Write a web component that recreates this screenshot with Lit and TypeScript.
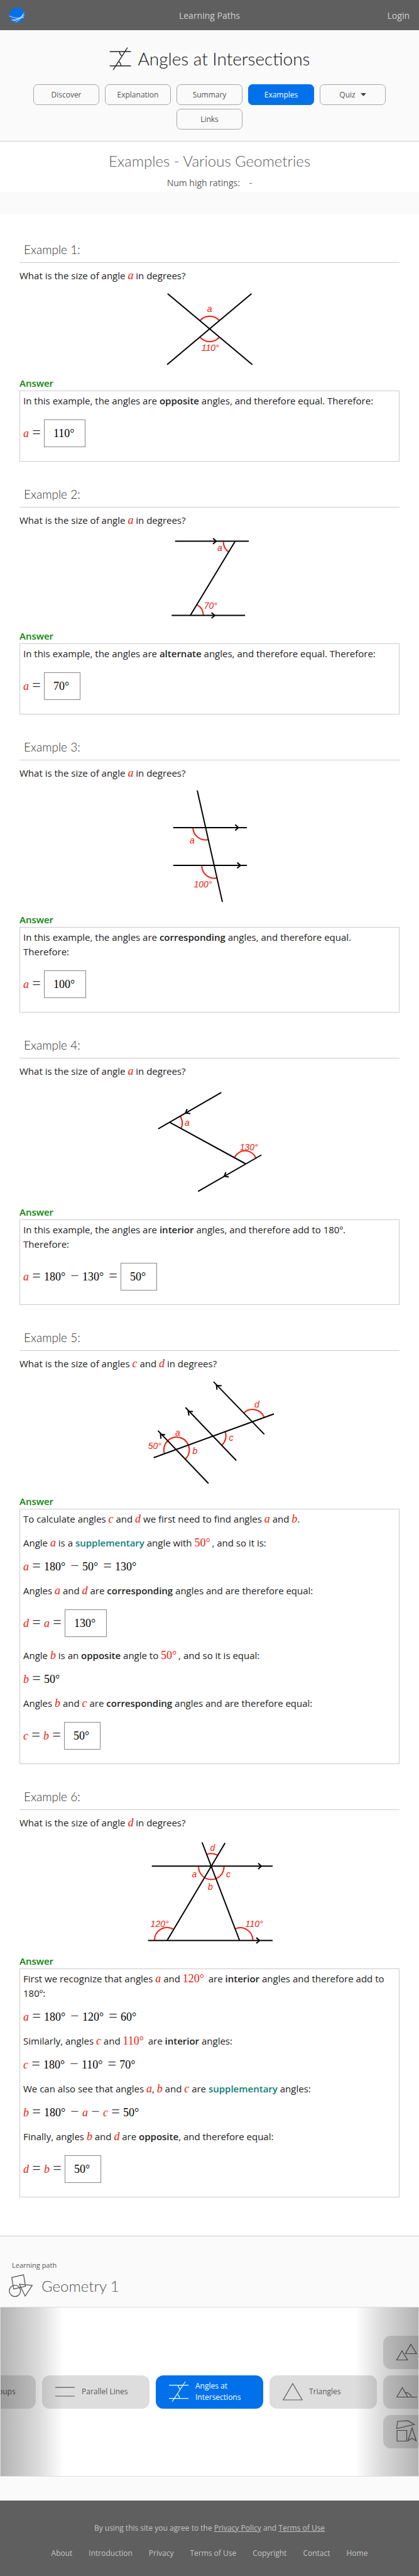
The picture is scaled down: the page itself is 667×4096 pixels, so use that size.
import { LitElement, html, svg, css, TemplateResult, SVGTemplateResult } from "lit";
import { customElement, property } from "lit/decorators.js";

/** Shared look of mathematical notation. */
const mathStyles = css`
  .m {
    font-family: "Liberation Serif", "Times New Roman", serif;
    font-size: 18px;
    line-height: 1;
    color: #000;
  }
  .v,
  .red {
    color: #f0200c;
  }
  .v {
    font-style: italic;
  }
  .deg {
    display: inline-block;
    width: 10px;
  }
  .op {
    display: inline-block;
    width: 14px;
    margin: 0 5px;
    font-size: 24px;
    line-height: 0;
    text-align: center;
    color: #333;
  }
`;

const sign = html`<span class="deg">°</span>`;
const v = (name: string) => html`<span class="m v">${name}</span>`;
const deg = (n: number) => html`<span class="m">${n}${sign}</span>`;
const redDeg = (n: number) => html`<span class="m red">${n}${sign}</span>`;
const op = (symbol: string) => html`<span class="m op">${symbol}</span>`;
const eq = op("=");
const minus = op("−");
const boxed = (n: number) => html`<span class="m boxed">${n}${sign}</span>`;

interface Diagram {
  height: number;
  label: string;
  lines: string[];
  arcs: string[];
  texts: [number, number, string][];
}

interface Example {
  question: TemplateResult;
  diagram: Diagram;
  answer: TemplateResult;
}

const examples: Example[] = [
  {
    question: html`What is the size of angle ${v("a")} in degrees?`,
    diagram: {
      height: 148,
      label: "Two crossing lines",
      lines: ["M72.8 16.9L207.6 129.7", "M206.4 16.9L72 129.7"],
      arcs: ["M124.7 59.5A20.5 20.5 0 0 1 154.9 59.5", "M124.7 86.5A20.5 20.5 0 0 0 154.9 86.5"],
      texts: [[135.8, 46.4, "a"], [126.8, 108, "110°"]],
    },
    answer: html`
      <p>In this example, the angles are <b>opposite</b> angles, and therefore equal. Therefore:</p>
      <p class="result">${v("a")}${eq}${boxed(110)}</p>
    `,
  },
  {
    question: html`What is the size of angle ${v("a")} in degrees?`,
    diagram: {
      height: 161,
      label: "A line joining two parallel lines",
      lines: [
        "M84.7 21.4H202.1", "M79.2 139.6H196.2", "M180.4 21.4L109 139.6",
        "M145.1 17L150.2 21.4L145.1 25.9", "M142.6 135.2L148.1 139.6L142.6 144",
      ],
      arcs: ["M161.7 22.4A20 20 0 0 0 169.8 38.6", "M119.2 122.4A20 20 0 0 1 129.8 139"],
      texts: [[151.9, 37.3, "a"], [130.7, 129.1, "70°"]],
    },
    answer: html`
      <p>In this example, the angles are <b>alternate</b> angles, and therefore equal. Therefore:</p>
      <p class="result">${v("a")}${eq}${boxed(70)}</p>
    `,
  },
  {
    question: html`What is the size of angle ${v("a")} in degrees?`,
    diagram: {
      height: 210,
      label: "A line crossing two parallel lines",
      lines: [
        "M120 15.9L160 193.1", "M81.7 74.9H199.1", "M81.7 135H199.1",
        "M180.4 70.3L185.5 74.9L180.4 79.5", "M183.6 130.4L188.7 135L183.6 139.6",
      ],
      arcs: ["M113.2 75.9A20 20 0 0 0 137.5 94", "M127.2 136A20 20 0 0 0 151.5 155"],
      texts: [[108.1, 99.7, "a"], [114.5, 170.2, "100°"]],
    },
    answer: html`
      <p>In this example, the angles are <b>corresponding</b> angles, and therefore equal. Therefore:</p>
      <p class="result">${v("a")}${eq}${boxed(100)}</p>
    `,
  },
  {
    question: html`What is the size of angle ${v("a")} in degrees?`,
    diagram: {
      height: 201,
      label: "A line joining two sloping parallel lines",
      lines: [
        "M158.3 22.1L57.9 79.9", "M75.8 69.4L197 135.5", "M222.1 121.5L121.3 179.3",
        "M103.9 48.5L101.3 54.8L109 55.8", "M165.5 148.8L163 155.3L170.2 156.4",
      ],
      arcs: ["M92.8 59.9A20 20 0 0 1 94.1 79.6", "M179.6 125A18.5 18.5 0 0 1 213.2 126"],
      texts: [[100, 75.4, "a"], [187.7, 113.6, "130°"]],
    },
    answer: html`
      <p>In this example, the angles are <b>interior</b> angles, and therefore add to 180º. Therefore:</p>
      <p class="result">${v("a")}${eq}${deg(180)}${minus}${deg(130)}${eq}${boxed(50)}</p>
    `,
  },
  {
    question: html`What is the size of angles ${v("c")} and ${v("d")} in degrees?`,
    diagram: {
      height: 196,
      label: "A line crossing three parallel lines",
      lines: [
        "M50.7 137.8L242.1 68.2", "M57.5 94.9L137.9 178.7", "M101.3 58L182.1 142.2", "M146 17.1L226.8 100.6",
        "M69 101.6L61.5 100.4L62.2 107.6", "M113.2 64.4L105.6 64L106.8 70.8", "M158.7 23.4L150.6 23L151.5 29.8",
      ],
      arcs: [
        "M67.7 131.7A20 20 0 0 1 73.2 110.8", "M73.2 110.8A20 20 0 0 1 105.6 117.1",
        "M105.6 117.1A20 20 0 0 1 101.3 139.7", "M164.7 96.8A20 20 0 0 1 159.2 117.8",
        "M194 66.9A20 20 0 0 1 226.4 73.3",
      ],
      texts: [
        [85.1, 103.1, "a"], [41.7, 124.1, "50°"], [112.4, 131.7, "b"], [170.6, 111.4, "c"], [211, 58.4, "d"],
      ],
    },
    answer: html`
      <p>To calculate angles ${v("c")} and ${v("d")} we first need to find angles ${v("a")} and ${v("b")}.</p>
      <p>Angle ${v("a")} is a <a href="#supplementary">supplementary</a> angle with ${redDeg(50)}, and so it is:</p>
      <p>${v("a")}${eq}${deg(180)}${minus}${deg(50)}${eq}${deg(130)}</p>
      <p>Angles ${v("a")} and ${v("d")} are <b>corresponding</b> angles and are therefore equal:</p>
      <p class="result">${v("d")}${eq}${v("a")}${eq}${boxed(130)}</p>
      <p>Angle ${v("b")} is an <b>opposite</b> angle to ${redDeg(50)}, and so it is equal:</p>
      <p>${v("b")}${eq}${deg(50)}</p>
      <p>Angles ${v("b")} and ${v("c")} are <b>corresponding</b> angles and are therefore equal:</p>
      <p class="result">${v("c")}${eq}${v("b")}${eq}${boxed(50)}</p>
    `,
  },
  {
    question: html`What is the size of angle ${v("d")} in degrees?`,
    diagram: {
      height: 197,
      label: "Two lines crossing on one of two parallel lines",
      lines: [
        "M47.7 57.3H240", "M41.7 175.5H240", "M127.7 19.5L187.4 175.5", "M164.3 20.5L72 175.5",
        "M217 52.7L221.9 57.3L217 61.9", "M214 170.9L219.1 175.5L214 180.1",
      ],
      arcs: [
        "M135.3 38.6A20 20 0 0 1 152.3 39.9", "M122.1 58.3A20.2 20.2 0 0 0 162.6 58.3",
        "M52 174.8A20 20 0 0 1 81.7 157.4", "M180.9 156.7A20 20 0 0 1 208.5 174.8",
      ],
      texts: [
        [140.4, 32.9, "d"], [111.5, 74.8, "a"], [166, 75.4, "c"], [137, 94.5, "b"],
        [45.6, 153.9, "120°"], [196.6, 153.9, "110°"],
      ],
    },
    answer: html`
      <p>First we recognize that angles ${v("a")} and ${redDeg(120)} are <b>interior</b> angles and therefore add to 180º:</p>
      <p>${v("a")}${eq}${deg(180)}${minus}${deg(120)}${eq}${deg(60)}</p>
      <p>Similarly, angles ${v("c")} and ${redDeg(110)} are <b>interior</b> angles:</p>
      <p>${v("c")}${eq}${deg(180)}${minus}${deg(110)}${eq}${deg(70)}</p>
      <p>We can also see that angles ${v("a")}, ${v("b")} and ${v("c")} are <a href="#supplementary">supplementary</a> angles:</p>
      <p>${v("b")}${eq}${deg(180)}${minus}${v("a")}${minus}${v("c")}${eq}${deg(50)}</p>
      <p>Finally, angles ${v("b")} and ${v("d")} are <b>opposite</b>, and therefore equal:</p>
      <p class="result">${v("d")}${eq}${v("b")}${eq}${boxed(50)}</p>
    `,
  },
];

const anglesIcon = svg`
  <path d="M.7 7H34.4M.7 29.8H34.4M29 .6L6.1 36.2M16.3 7Q16.3 12 21 14.2M18.5 29.8Q18.5 25 15 23.1" />
`;

@customElement("angle-diagram")
export class AngleDiagram extends LitElement {
  @property({ attribute: false }) diagram!: Diagram;

  static styles = css`
    :host {
      display: block;
    }
    svg {
      display: block;
      margin: 0 auto;
      fill: none;
      stroke-width: 2;
    }
    .line {
      stroke: #000;
    }
    .arc {
      stroke: #f0200c;
    }
    text {
      fill: #f0200c;
      font: italic 14px "Liberation Sans", Arial, sans-serif;
    }
  `;

  render() {
    const d = this.diagram;
    return html`
      <svg width="280" height=${d.height} role="img" aria-label=${d.label}>
        ${d.arcs.map((p) => svg`<path class="arc" d=${p} />`)}
        ${d.lines.map((p) => svg`<path class="line" d=${p} />`)}
        ${d.texts.map(([x, y, t]) => svg`<text x=${x} y=${y}>${t}</text>`)}
      </svg>
    `;
  }
}

@customElement("worked-example")
export class WorkedExample extends LitElement {
  @property({ type: Number }) number = 1;
  @property({ attribute: false }) example!: Example;

  static styles = [
    mathStyles,
    css`
      :host {
        display: block;
      }
      h3 {
        margin: 0 0 9px;
        padding: 0 7px 8px;
        border-bottom: 1px solid #ccc;
        font: 300 19px/24px Lato, sans-serif;
        color: #333;
      }
      p {
        margin: 0;
      }
      h4 {
        margin: 0;
        font-size: 15px;
        line-height: 23px;
        font-weight: 600;
        color: #0a840a;
      }
      .answer {
        display: flex;
        flex-direction: column;
        gap: 15px;
        padding: 4px 12px 19px 5px;
        border: 1px solid #ccc;
      }
      .result {
        display: flex;
        align-items: baseline;
        padding: 3px 0;
      }
      .boxed {
        padding: 11px 14px 10px;
        border: 1px solid #888;
        line-height: 21px;
      }
      b {
        font-weight: 600;
      }
      a {
        color: #0a7d74;
        font-weight: 600;
        text-decoration: none;
      }
    `,
  ];

  render() {
    return html`
      <section>
        <h3>Example ${this.number}:</h3>
        <p>${this.example.question}</p>
        <angle-diagram .diagram=${this.example.diagram}></angle-diagram>
        <h4>Answer</h4>
        <div class="answer">${this.example.answer}</div>
      </section>
    `;
  }
}

@customElement("path-card")
export class PathCard extends LitElement {
  @property() label = "";
  @property({ type: Boolean, reflect: true }) active = false;
  @property({ attribute: false }) icon: SVGTemplateResult = svg``;

  static styles = css`
    :host {
      display: block;
    }
    a {
      display: flex;
      align-items: center;
      gap: 11px;
      box-sizing: border-box;
      width: 171px;
      height: 53px;
      padding: 0 20px 0 21px;
      border-radius: 12px;
      background: #ddd;
      color: #5a5a5a;
      font-size: 12px;
      line-height: 18px;
      text-decoration: none;
    }
    svg {
      flex: none;
      width: 31px;
      height: 40px;
      overflow: visible;
      fill: none;
      stroke: currentColor;
      stroke-width: 1.2;
    }
    :host([active]) a {
      background: #0071eb;
      color: #fff;
    }
  `;

  render() {
    return html`<a href="#lesson" aria-label=${this.label || "Lesson"}
      ><svg viewBox="0 0 31 40" aria-hidden="true">${this.icon}</svg>${this.label}</a
    >`;
  }
}

const icons = {
  groups: svg`<path d="M1 30L30 30M1 30L24 8" />`,
  parallel: svg`<path d="M0 13.2H31M0 27H31" />`,
  angles: svg`<path d="M0 9.6H31M0 30.6H31M26 4L5 36M14.5 9.6Q14.5 14 18.5 16M16.8 30.6Q16.5 26 13.5 24.3" />`,
  triangle: svg`<path d="M16 7L31 33H.8Z" />`,
  congruent: svg`<path d="M23 7.5L32 22.5H14.5ZM9 18L17.7 32.5H.5Z" />`,
  exterior: svg`<path d="M.5 28.5H33M.5 28.5L9.5 13.5L18 28.5M13.8 21.5A9.5 9.5 0 0 1 24 28.5" />`,
  shapes: svg`<path d="M2 4L18.5 3.2L28.5 9L.5 15.5ZM1 18.5H16.5V35.5H1ZM25 14.5L31.5 35L25 31L18.5 35Z" />`,
};

@customElement("app-root")
export class AppRoot extends LitElement {
  static styles = css`
    :host {
      display: block;
      background: #fff;
      color: #222;
      font: 15px/23px "Open Sans", sans-serif;
    }
    .top {
      display: grid;
      grid-template-columns: 1fr auto 1fr;
      align-items: center;
      height: 48px;
      padding: 0 15px;
      background: #5f5f5f;
      font-size: 14px;
    }
    .top a {
      color: #d0d0d0;
      text-decoration: none;
    }
    .top .login {
      justify-self: end;
    }
    .logo {
      display: block;
      width: 24px;
    }
    .logo svg {
      display: block;
    }
    .lesson {
      display: flex;
      flex-direction: column;
      gap: 22px;
      padding: 27px 0 18px;
      border-bottom: 1px solid #ccc;
      background: #fafafa;
    }
    .title {
      display: flex;
      justify-content: center;
      align-items: center;
      gap: 11px;
      margin: 0;
      font: 300 28px/37px Lato, sans-serif;
      color: #111;
    }
    .title svg {
      fill: none;
      stroke: #222;
      stroke-width: 1.4;
    }
    .tabs {
      display: flex;
      flex-wrap: wrap;
      justify-content: center;
      gap: 6px 9px;
    }
    .tab {
      display: flex;
      align-items: center;
      justify-content: center;
      gap: 8px;
      box-sizing: border-box;
      width: 105px;
      height: 33px;
      padding: 0;
      border: 1px solid #a8a8a8;
      border-radius: 7px;
      background: none;
      color: #555;
      font: 12px/18px "Open Sans", sans-serif;
      text-decoration: none;
    }
    .tab.on {
      border-color: #0071eb;
      background: #0071eb;
      color: #fff;
    }
    .intro {
      padding: 16px 0 4px;
      text-align: center;
      color: #606060;
    }
    .intro h2 {
      margin: 0 0 10px;
      font: 300 24px/30px Lato, sans-serif;
    }
    .ratings {
      display: flex;
      justify-content: center;
      gap: 15px;
      margin: 0;
      font-size: 14px;
      line-height: 20px;
    }
    .band {
      height: 35px;
      background: #fafafa;
    }
    main {
      display: flex;
      flex-direction: column;
      gap: 40px;
      padding: 45px 31px 61px;
    }
    .path {
      padding: 38px 0;
      border-top: 1px solid #ccc;
      background: #fafafa;
      color: #555;
    }
    .path .small {
      margin: 0 19px 6px;
      font-size: 11px;
      line-height: 16px;
    }
    .path h2 {
      display: flex;
      align-items: center;
      gap: 14px;
      margin: 0 14px 14px;
      font: 300 24px/38px Lato, sans-serif;
    }
    .path h2 svg {
      fill: none;
      stroke: #555;
      stroke-width: 1.3;
    }
    .carousel {
      position: relative;
      display: flex;
      justify-content: center;
      align-items: center;
      gap: 10px;
      height: 268px;
      border: 1px solid #ddd;
      background: #fff;
      overflow: hidden;
    }
    .carousel > * {
      flex: none;
    }
    .stack {
      display: flex;
      flex-direction: column;
      gap: 10px;
    }
    .carousel::before,
    .carousel::after {
      content: "";
      position: absolute;
      z-index: 1;
      top: 0;
      bottom: 0;
      width: 100px;
      pointer-events: none;
    }
    .carousel::before {
      left: 0;
      background: linear-gradient(to right, rgba(0, 0, 0, 0.3), rgba(0, 0, 0, 0.14) 60%, rgba(0, 0, 0, 0));
    }
    .carousel::after {
      right: 0;
      background: linear-gradient(to left, rgba(0, 0, 0, 0.3), rgba(0, 0, 0, 0.14) 60%, rgba(0, 0, 0, 0));
    }
    footer {
      display: flex;
      flex-direction: column;
      align-items: center;
      gap: 20px;
      padding: 34px 0 26px;
      background: #5f5f5f;
      color: #c4c4c4;
      font-size: 12px;
      line-height: 20px;
    }
    footer p {
      margin: 0;
    }
    footer a {
      color: inherit;
    }
    footer nav {
      display: flex;
      gap: 26px;
    }
    footer nav a {
      text-decoration: none;
    }
  `;

  render() {
    return html`
      <header class="top">
        <a class="logo" href="#home" aria-label="Home">
          <svg width="24" height="24" viewBox="0 0 24 24" aria-hidden="true">
            <circle cx="12" cy="12" r="12" fill="#0071eb" />
            <path
              d="M0 13.4Q9 18.5 23 15.8M3 19.9Q17 20 23.4 8.2M6 21.2Q17 19 23.9 12M9.5 23.4Q18 20 22 11"
              fill="none" stroke="#e6effa" stroke-width=".9" />
          </svg>
        </a>
        <a href="#paths">Learning Paths</a>
        <a class="login" href="#login">Login</a>
      </header>

      <div class="lesson">
        <h1 class="title">
          <svg width="35" height="37" aria-hidden="true">${anglesIcon}</svg>
          Angles at Intersections
        </h1>
        <nav class="tabs">
          <a class="tab" href="#discover">Discover</a>
          <a class="tab" href="#explanation">Explanation</a>
          <a class="tab" href="#summary">Summary</a>
          <a class="tab on" href="#examples">Examples</a>
          <button class="tab">
            Quiz
            <svg width="9" height="5" aria-hidden="true"><path d="M0 0H9L4.5 5Z" fill="#444" /></svg>
          </button>
          <a class="tab" href="#links">Links</a>
        </nav>
      </div>

      <div class="intro">
        <h2>Examples - Various Geometries</h2>
        <p class="ratings"><span>Num high ratings:</span><span>-</span></p>
      </div>
      <div class="band"></div>

      <main>
        ${examples.map((e, i) => html`<worked-example .number=${i + 1} .example=${e}></worked-example>`)}
      </main>

      <section class="path">
        <p class="small">Learning path</p>
        <h2>
          <svg width="38" height="38" aria-hidden="true">
            <path d="M4.6 5.3L23.5 1L26.6 19.3L7.8 23.6ZM17 16.2L37.3 17.8L26 35Z" />
            <circle cx="9.8" cy="26.6" r="9" />
          </svg>
          Geometry 1
        </h2>
        <div class="carousel">
          <path-card label="Angle Groups" .icon=${icons.groups}></path-card>
          <path-card label="Parallel Lines" .icon=${icons.parallel}></path-card>
          <path-card active label="Angles at Intersections" .icon=${icons.angles}></path-card>
          <path-card label="Triangles" .icon=${icons.triangle}></path-card>
          <div class="stack">
            <path-card .icon=${icons.congruent}></path-card>
            <path-card .icon=${icons.exterior}></path-card>
            <path-card .icon=${icons.shapes}></path-card>
          </div>
        </div>
      </section>

      <footer>
        <p>
          By using this site you agree to the <a href="#privacy">Privacy Policy</a> and
          <a href="#terms">Terms of Use</a>
        </p>
        <nav>
          <a href="#about">About</a>
          <a href="#introduction">Introduction</a>
          <a href="#privacy">Privacy</a>
          <a href="#terms">Terms of Use</a>
          <a href="#copyright">Copyright</a>
          <a href="#contact">Contact</a>
          <a href="#home">Home</a>
        </nav>
      </footer>
    `;
  }
}
